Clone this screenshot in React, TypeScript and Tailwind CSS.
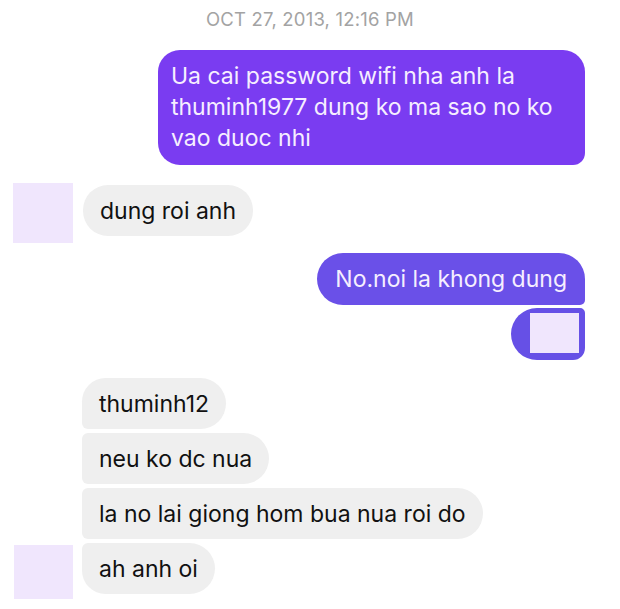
import React from "react";

const font = { fontFamily: "Inter, 'Liberation Sans', sans-serif" };

function Gray({ children, className = "" }: { children: React.ReactNode; className?: string }) {
  return (
    <div
      className={`h-[51px] flex items-center pl-[17px] pr-[17px] bg-[#efefef] text-[#111111] text-[23px] leading-[28px] whitespace-nowrap w-fit ${className}`}
    >
      {children}
    </div>
  );
}

export default function App() {
  return (
    <div className="w-[620px] h-[609px] bg-white overflow-hidden relative" style={font}>
      <div className="h-[38px] leading-[38px] text-center text-[18.5px] text-[#a3a3a3] tracking-[0.2px]">
        OCT 27, 2013, 12:16 PM
      </div>

      <div className="flex justify-end pr-[35px] mt-[12px]">
        <div className="w-[427px] h-[115px] bg-[#7a3cf1] rounded-[22px] rounded-br-[12px] pl-[13px] pt-[11px] text-[#f6eeff] text-[23px] leading-[31px] whitespace-nowrap">
          Ua cai password wifi nha anh la
          <br />
          thuminh1977 dung ko ma sao no ko
          <br />
          vao duoc nhi
        </div>
      </div>

      <div className="flex items-start mt-[18px] pl-[13px]">
        <div className="w-[60px] h-[60px] bg-[#f0e6fd]" />
        <Gray className="ml-[10px] mt-[2px] h-[50px] rounded-[25px]">dung roi anh</Gray>
      </div>

      <div className="flex flex-col items-end pr-[35px] mt-[10px]">
        <div className="h-[52px] flex items-center pl-[18px] pr-[18px] bg-[#6a50e8] text-[#f6eeff] text-[23px] whitespace-nowrap rounded-[26px] rounded-br-[5px]">
          No.noi la khong dung
        </div>
        <div className="mt-[3px] w-[74px] h-[52px] bg-[#6650e6] rounded-l-[26px] rounded-tr-[5px] rounded-br-[12px] flex items-start justify-end pt-[5px] pr-[6px]">
          <div className="w-[49px] h-[40px] bg-[#f0e6fd]" />
        </div>
      </div>

      <div className="flex flex-col mt-[18px] pl-[82px] gap-[4px]">
        <Gray className="rounded-r-[26px] rounded-tl-[24px] rounded-bl-[6px]">thuminh12</Gray>
        <Gray className="rounded-r-[26px] rounded-l-[6px]">neu ko dc nua</Gray>
        <Gray className="rounded-r-[26px] rounded-l-[6px]">la no lai giong hom bua nua roi do</Gray>
      </div>
      <div className="flex items-start mt-[4px] pl-[14px]">
        <div className="w-[59px] h-[54px] mt-[2px] bg-[#f0e6fd]" />
        <Gray className="ml-[9px] rounded-r-[26px] rounded-tl-[6px] rounded-bl-[24px]">ah anh oi</Gray>
      </div>
    </div>
  );
}
